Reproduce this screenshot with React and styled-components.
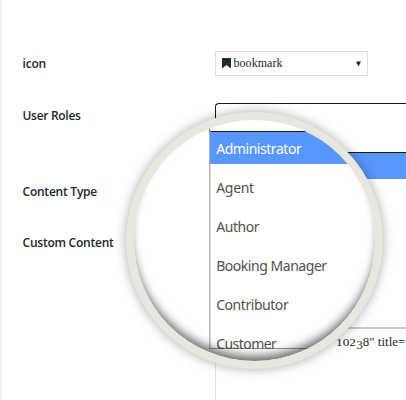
import React from "react";
import styled, { createGlobalStyle } from "styled-components";

const GlobalStyle = createGlobalStyle`
  * { box-sizing: border-box; }
  body { margin: 0; background: #fff; overflow: hidden; }
`;

const Page = styled.main`
  position: relative;
  width: 406px;
  height: 400px;
  overflow: hidden;
  border-left: 1px solid #e9e9e9;
  background: #fff;
  color: #23282d;
  font-family: "Open Sans", "Noto Sans", sans-serif;
`;

const Form = styled.div`
  display: grid;
  grid-template-columns: 192px 1fr;
  padding: 51px 0 0 21.5px;
`;

const Labels = styled.div`
  display: grid;
  grid-template-rows: 52px 76px 51px 26px;
  padding-top: 1px;
`;

const Label = styled.label`
  font-size: 12px;
  font-weight: 560;
  line-height: 24px;
  white-space: nowrap;
  letter-spacing: ${(p) => p.$tracking}px;
`;

const Fields = styled.div`
  display: flex;
  flex-direction: column;
  min-width: 0;
`;

const Select = styled.div`
  display: flex;
  align-items: center;
  width: 153px;
  height: 25px;
  margin-left: 0.5px;
  padding: 0 6px;
  border: 1px solid #ddd;
  font: 12px/23px "Liberation Serif", serif;
`;

const SelectValue = styled.span`
  flex: 1;
  margin-left: 2.5px;
  letter-spacing: 0.05px;
`;

const RoleInput = styled.div`
  height: 50px;
  margin-top: 27px;
  border: 1px solid #17191c;
  border-right: 0;
  border-radius: 4px 0 0 0;
`;

const RoleMenu = styled.div`
  height: 176px;
  border-left: 1px solid #aaa;
  border-bottom: 2px solid #ccc;
`;

const ActiveStrip = styled.div`
  height: 26px;
  background: #5897fb;
`;

const Editor = styled.div`
  height: 80px;
  padding: 4px 0 0 120.5px;
  border-left: 1px solid #e2e2e2;
  font: 13px/18px "Liberation Serif", serif;
  white-space: nowrap;
`;

const SmallNumeral = styled.span`
  display: inline-block;
  font-size: 9.5px;
  line-height: 1;
  transform: scaleX(1.4);
  transform-origin: 0 100%;
  margin-right: 6px;
`;

const LowNumeral = styled.span`
  display: inline-block;
  line-height: 1;
  transform: translateY(2.5px);
`;

const Lens = styled.section`
  position: absolute;
  left: 125px;
  top: 112px;
  width: 257px;
  height: 257px;
  border: 8px solid #e7e7df;
  border-radius: 50%;
  background: #fff;
  overflow: hidden;
  box-shadow: 0 0 12px rgba(0, 0, 0, 0.33);

  &::after {
    content: "";
    position: absolute;
    inset: 0;
    border-radius: 50%;
    box-shadow: inset 0 -8px 10px -3px rgba(0, 0, 0, 0.58);
    pointer-events: none;
  }
`;

const InputEdge = styled.div`
  height: 12px;
  margin-left: 75px;
  border-left: 1px solid #555;
  border-bottom: 1px solid #17191c;
  border-radius: 0 0 0 2px;
`;

const Options = styled.ul`
  height: 217px;
  margin: 0 0 0 75px;
  padding: 0;
  list-style: none;
  border-left: 1px solid #b4b4b4;
  border-bottom: 1px solid #999;
  box-shadow: inset 1px 0 #dedede;
`;

const Option = styled.li`
  height: ${(p) => (p.$active ? 32 : 39)}px;
  margin-bottom: ${(p) => (p.$active ? 4 : 0)}px;
  padding-left: 6.2px;
  background: ${(p) => (p.$active ? "#5897fb" : "transparent")};
  color: ${(p) => (p.$active ? "#fff" : "#50504f")};
  font: 14px/${(p) => (p.$active ? 33 : 39)}px "Noto Sans", sans-serif;
  letter-spacing: ${(p) => p.$tracking}px;
  white-space: nowrap;
`;

const labels = [
  ["icon", -0.2],
  ["User Roles", -0.3],
  ["Content Type", -0.23],
  ["Custom Content", -0.23],
];

const roles = [
  ["Administrator", -0.45],
  ["Agent", -0.3],
  ["Author", -0.45],
  ["Booking Manager", -0.46],
  ["Contributor", -0.45],
  ["Customer", -0.55],
];

export default function App() {
  return (
    <>
      <GlobalStyle />
      <Page>
        <Form>
          <Labels>
            {labels.map(([text, tracking]) => (
              <Label key={text} $tracking={tracking}>{text}</Label>
            ))}
          </Labels>
          <Fields>
            <Select>
              <svg width="9" height="11" viewBox="0 0 9 11" aria-hidden="true">
                <path d="M0 0H9V10.5L4.5 7L0 10.5Z" fill="#23282d" />
              </svg>
              <SelectValue>bookmark</SelectValue>
              <svg width="5" height="6" viewBox="0 0 5 6" aria-hidden="true">
                <path d="M0 0.5H5L2.5 5.5Z" fill="#23282d" />
              </svg>
            </Select>
            <RoleInput />
            <RoleMenu>
              <ActiveStrip />
            </RoleMenu>
            <Editor>
              <SmallNumeral>102</SmallNumeral><LowNumeral>3</LowNumeral>8" title=
            </Editor>
          </Fields>
        </Form>
        <Lens>
          <InputEdge />
          <Options>
            {roles.map(([name, tracking], index) => (
              <Option key={name} $active={index === 0} $tracking={tracking}>{name}</Option>
            ))}
          </Options>
        </Lens>
      </Page>
    </>
  );
}
